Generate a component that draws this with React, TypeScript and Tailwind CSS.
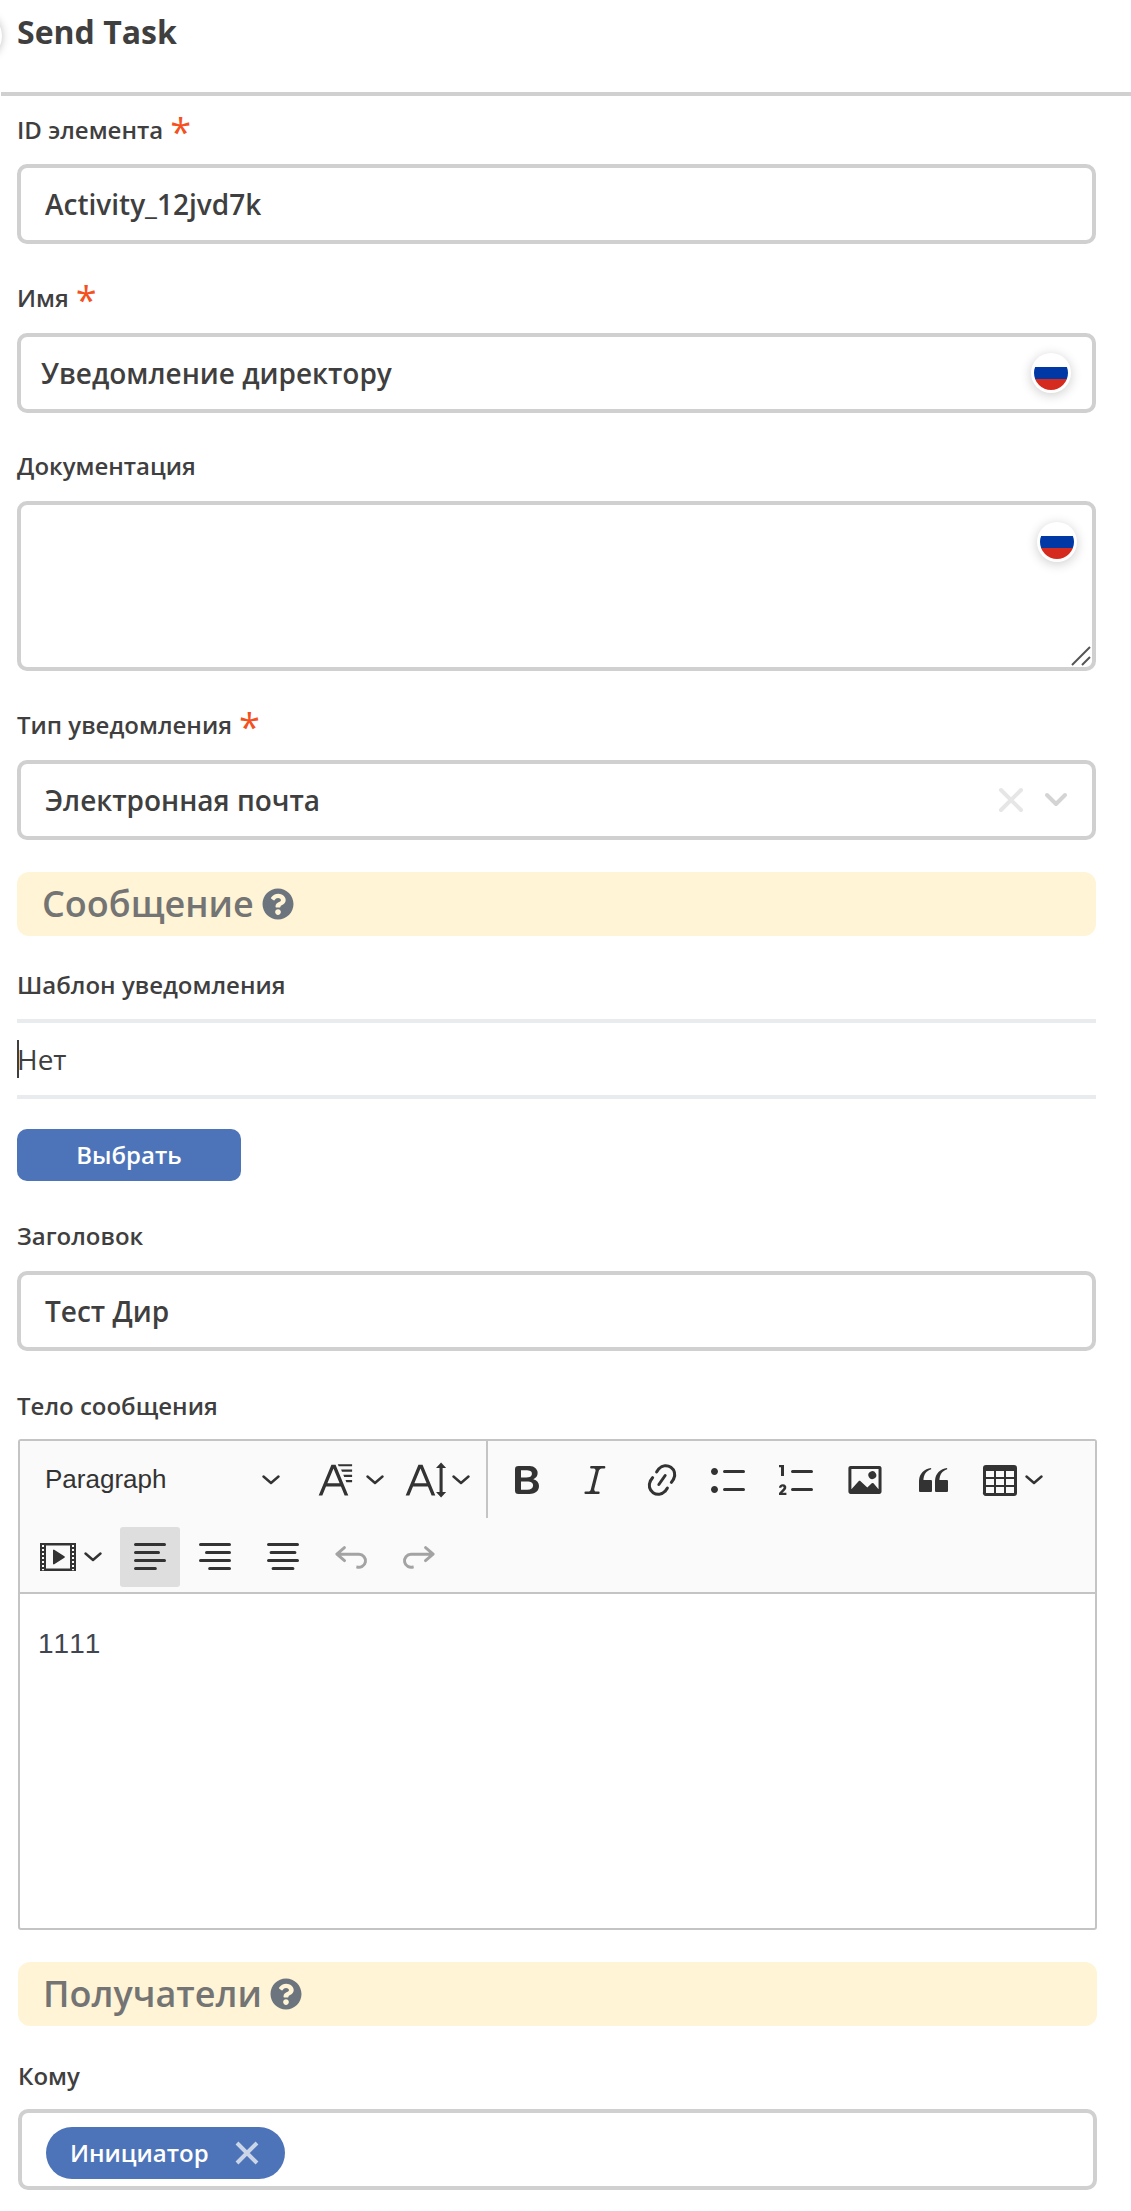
import React from "react";

const F = "[font-family:'Open_Sans','Noto_Sans',sans-serif]";

function Label({ children, req, className = "" }: { children: React.ReactNode; req?: boolean; className?: string }) {
  return (
    <div className={`flex items-start h-[28px] text-[24px] leading-[28px] font-semibold text-[#3f3f3f] ${className}`}>
      <span>{children}</span>
      {req && <span className="ml-[7px] text-[38px] leading-[30px] text-[#f4511e] font-normal">*</span>}
    </div>
  );
}

function Flag({ className = "" }: { className?: string }) {
  return (
    <span className={`absolute w-[40px] h-[40px] rounded-full bg-white shadow-[0_2px_12px_rgba(0,0,0,0.2)] p-[3px] ${className}`}>
      <span className="flex flex-col w-full h-full rounded-full overflow-hidden">
        <span className="h-[11px] bg-white" />
        <span className="h-[12px] bg-[#0039a6]" />
        <span className="flex-1 bg-[#d52b1e]" />
      </span>
    </span>
  );
}

function Help() {
  return (
    <svg width="32" height="32" viewBox="0 0 512 512" className="ml-[8px]">
      <path fill="#6c757d" d="M504 256c0 136.997-111.043 248-248 248S8 392.997 8 256C8 119.083 119.043 8 256 8s248 111.083 248 248zM262.655 90c-54.497 0-89.255 22.957-116.549 63.758-3.536 5.286-2.353 12.415 2.715 16.258l34.699 26.31c5.205 3.947 12.621 3.008 16.665-2.122 17.864-22.658 30.113-35.797 57.303-35.797 20.429 0 45.698 13.148 45.698 32.958 0 14.976-12.363 22.667-32.534 33.976C247.128 238.528 216 254.941 216 296v4c0 6.627 5.373 12 12 12h56c6.627 0 12-5.373 12-12v-1.333c0-28.462 83.186-29.647 83.186-106.667 0-58.002-60.165-102-116.531-102zM256 338c-25.365 0-46 20.635-46 46 0 25.364 20.635 46 46 46s46-20.636 46-46c0-25.365-20.635-46-46-46z" />
    </svg>
  );
}

function Section({ children }: { children: React.ReactNode }) {
  return (
    <div className="flex items-center h-[64px] rounded-[12px] bg-[#fff4d6] pl-[25px] text-[36px] font-semibold text-[#747474]">
      {children}
      <Help />
    </div>
  );
}

const boxCls = "relative rounded-[10px] border-[4px] border-[#d0d0d0] bg-white text-[#3f3f3f]";

function Ic({ d, size = 40, color = "#333", rule, className = "" }: { d: string; size?: number; color?: string; rule?: "evenodd"; className?: string }) {
  return (
    <svg width={size} height={size} viewBox="0 0 20 20" className={`shrink-0 ${className}`}>
      <path d={d} fill={color} fillRule={rule} />
    </svg>
  );
}

function Chev() {
  return (
    <svg width="18" height="10" viewBox="0 0 18 10" className="shrink-0">
      <path d="M1.5 1.5 9 8l7.5-6.5" fill="none" stroke="#333" strokeWidth="2.4" strokeLinecap="round" strokeLinejoin="round" />
    </svg>
  );
}

const P = {
  bold: "M10.187 17H5.773c-.637 0-1.092-.138-1.364-.415-.273-.277-.409-.718-.409-1.323V4.738c0-.617.14-1.062.419-1.332.279-.27.73-.406 1.354-.406h4.68c.69 0 1.288.041 1.793.124.506.083.96.242 1.36.478.341.197.644.447.906.75a3.262 3.262 0 0 1 .808 2.162c0 1.401-.722 2.426-2.167 3.075C15.05 10.175 16 11.315 16 13.01a3.756 3.756 0 0 1-2.296 3.504 6.1 6.1 0 0 1-1.517.377c-.571.073-1.238.11-2 .11zm-.217-6.217H7v4.087h3.069c1.977 0 2.965-.69 2.965-2.072 0-.707-.256-1.22-.768-1.537-.512-.319-1.277-.478-2.296-.478zM7 5.13v3.619h2.606c.729 0 1.292-.067 1.69-.2a1.6 1.6 0 0 0 .91-.765c.165-.267.247-.566.247-.897 0-.707-.26-1.176-.778-1.409-.519-.232-1.31-.348-2.375-.348H7z",
  italic: "m9.586 14.633.021.004c-.036.335.095.655.393.962.082.083.173.15.274.201h1.474a.6.6 0 1 1 0 1.2H5.304a.6.6 0 0 1 0-1.2h1.15c.474-.07.809-.182 1.005-.334.157-.122.291-.32.404-.597l2.416-9.55a1.053 1.053 0 0 0-.281-.823 1.12 1.12 0 0 0-.442-.296H8.15a.6.6 0 0 1 0-1.2h6.443a.6.6 0 1 1 0 1.2h-1.195c-.376.056-.65.155-.823.296-.215.175-.423.439-.623.79l-2.366 9.347z",
  link: "m11.077 15 .991-1.416a.75.75 0 1 1 1.229.86l-1.148 1.64a.748.748 0 0 1-.217.206 5.251 5.251 0 0 1-8.503-5.955.741.741 0 0 1 .12-.274l1.147-1.639a.75.75 0 1 1 1.228.86L4.933 10.7l.006.003a3.75 3.75 0 0 0 6.132 4.294l.006.004zm5.494-5.335a.748.748 0 0 1-.12.274l-1.147 1.639a.75.75 0 1 1-1.228-.86l.86-1.23a3.75 3.75 0 0 0-6.144-4.301l-.86 1.229a.75.75 0 0 1-1.229-.86l1.148-1.64a.748.748 0 0 1 .217-.206 5.251 5.251 0 0 1 8.503 5.955zm-4.563-2.532a.75.75 0 0 1 .184 1.045l-3.155 4.505a.75.75 0 1 1-1.229-.86l3.155-4.506a.75.75 0 0 1 1.045-.184z",
  bullet: "M7 5.75c0 .414.336.75.75.75h9.5a.75.75 0 1 0 0-1.5h-9.5a.75.75 0 0 0-.75.75zm-6 0C1 4.784 1.777 4 2.75 4c.966 0 1.75.777 1.75 1.75 0 .966-.777 1.75-1.75 1.75C1.784 7.5 1 6.723 1 5.75zm6 9c0 .414.336.75.75.75h9.5a.75.75 0 1 0 0-1.5h-9.5a.75.75 0 0 0-.75.75zm-6 0c0-.966.777-1.75 1.75-1.75.966 0 1.75.777 1.75 1.75 0 .966-.777 1.75-1.75 1.75-.966 0-1.75-.777-1.75-1.75z",
  number: "M7 5.75c0 .414.336.75.75.75h9.5a.75.75 0 1 0 0-1.5h-9.5a.75.75 0 0 0-.75.75zM7 14.75c0 .414.336.75.75.75h9.5a.75.75 0 1 0 0-1.5h-9.5a.75.75 0 0 0-.75.75zM3.5 2.5V8H2V3.6H1v-1.1zM1 17.5v-1l2-2.1c.5-.5.4-1.2-.2-1.2-.4 0-.6.3-.6.7H1c0-1.2.8-1.8 1.9-1.8 1.3 0 2 .9 1.7 2-.1.5-.5 1-1.9 2.3h2v1.1z",
  image: "M6.91 10.54c.26-.23.64-.21.88.03l3.36 3.14 2.23-2.06a.64.64 0 0 1 .87 0l2.52 2.97V4.5H3.2v10.12l3.71-4.08zm10.27-7.51c.6 0 1.09.47 1.09 1.05v11.84c0 .59-.49 1.06-1.09 1.06H2.79c-.6 0-1.09-.47-1.09-1.06V4.08c0-.58.49-1.05 1.1-1.05h14.38zm-5.22 5.56a1.96 1.96 0 1 1 3.4-1.96 1.96 1.96 0 0 1-3.4 1.96z",
  quote: "M3 10.423a6.5 6.5 0 0 1 6.056-6.408l.038.67C6.448 5.423 5.354 7.663 5.22 10H9c.552 0 .5.432.5.986v4.511c0 .554-.448.503-1 .503h-5c-.552 0-.5-.449-.5-1.003v-4.574zm8 0a6.5 6.5 0 0 1 6.056-6.408l.038.67c-2.646.739-3.74 2.979-3.873 5.315H17c.552 0 .5.432.5.986v4.511c0 .554-.448.503-1 .503h-5c-.552 0-.5-.449-.5-1.003v-4.574z",
  table: "M3 5.5v3h4v-3H3zm0 4v3h4v-3H3zm0 4v3h4v-3H3zm5 3h4v-3H8v3zm5 0h4v-3h-4v3zm4-4v-3h-4v3h4zm0-4v-3h-4v3h4zm1.5 8a1.5 1.5 0 0 1-1.5 1.5H3A1.5 1.5 0 0 1 1.5 16V4A1.5 1.5 0 0 1 3 2.5h14A1.5 1.5 0 0 1 18.5 4v12zM8 9.5v3h4v-3H8zm0-4v3h4v-3H8z",
  media: "M1 3h18v14H1zM2 4v1h1V4zm0 2v1h1V6zm0 2v1h1V8zm0 2v1h1v-1zm0 2v1h1v-1zm0 2v1h1v-1zm0 2v.6h1V16zM17 4v1h1V4zm0 2v1h1V6zm0 2v1h1V8zm0 2v1h1v-1zm0 2v1h1v-1zm0 2v1h1v-1zm0 2v.6h1V16zM4 4.2v11.6h12V4.2zM7.5 6.7a.4.4 0 0 1 .6-.35l5.1 3.3a.4.4 0 0 1 0 .7l-5.1 3.3a.4.4 0 0 1-.6-.35z",
  alignLeft: "M2 3.75c0 .414.336.75.75.75h14.5a.75.75 0 1 0 0-1.5H2.75a.75.75 0 0 0-.75.75zm0 8c0 .414.336.75.75.75h14.5a.75.75 0 1 0 0-1.5H2.75a.75.75 0 0 0-.75.75zm0 4c0 .414.336.75.75.75h9.929a.75.75 0 1 0 0-1.5H2.75a.75.75 0 0 0-.75.75zm0-8c0 .414.336.75.75.75h11.5a.75.75 0 1 0 0-1.5H2.75a.75.75 0 0 0-.75.75z",
  alignRight: "M18 3.75a.75.75 0 0 1-.75.75H2.75a.75.75 0 1 1 0-1.5h14.5a.75.75 0 0 1 .75.75zm0 8a.75.75 0 0 1-.75.75H2.75a.75.75 0 1 1 0-1.5h14.5a.75.75 0 0 1 .75.75zm0 4a.75.75 0 0 1-.75.75H7.321a.75.75 0 1 1 0-1.5h9.929a.75.75 0 0 1 .75.75zm0-8a.75.75 0 0 1-.75.75H5.75a.75.75 0 1 1 0-1.5h11.5a.75.75 0 0 1 .75.75z",
  alignCenter: "M2 3.75c0 .414.336.75.75.75h14.5a.75.75 0 1 0 0-1.5H2.75a.75.75 0 0 0-.75.75zm0 8c0 .414.336.75.75.75h14.5a.75.75 0 1 0 0-1.5H2.75a.75.75 0 0 0-.75.75zm2.286 4c0 .414.336.75.75.75h9.928a.75.75 0 1 0 0-1.5H5.036a.75.75 0 0 0-.75.75zm-1-8c0 .414.336.75.75.75h11.928a.75.75 0 1 0 0-1.5H4.036a.75.75 0 0 0-.75.75z",
  undo: "m5.042 9.367 2.189 1.837a.75.75 0 0 1-.965 1.149l-3.788-3.18a.747.747 0 0 1-.21-.284.75.75 0 0 1 .17-.945L6.23 4.762a.75.75 0 1 1 .964 1.15L4.863 7.866h8.917A.75.75 0 0 1 14 7.9a4 4 0 1 1-1.477 7.718l.344-1.489a2.5 2.5 0 1 0 1.094-4.73l.008-.032H5.042z",
  redo: "m14.958 9.367-2.189 1.837a.75.75 0 0 0 .965 1.149l3.788-3.18a.747.747 0 0 0 .21-.284.75.75 0 0 0-.17-.945L13.77 4.762a.75.75 0 1 0-.964 1.15l2.331 1.955H6.22A.75.75 0 0 0 6 7.9a4 4 0 1 0 1.477 7.718l-.344-1.489A2.5 2.5 0 1 1 6.039 9.4l-.008-.032h8.927z",
  fontSize: "M9.816 11.5 7.038 4.785 4.261 11.5h5.555Zm.62 1.5H3.641l-1.666 4.028H.312l5.789-14h1.875l5.789 14h-1.663L10.436 13ZM9 2.8h6.5v1H9.4zM10.5 5.2h5v1H10.9zM11.5 7.6h4v1H11.9zM12.5 10h3v1H12.9z",
  lineHeight: "M9.816 11.5 7.038 4.785 4.261 11.5h5.555Zm.62 1.5H3.641l-1.666 4.028H.312l5.789-14h1.875l5.789 14h-1.663L10.436 13ZM16.4 2l2.3 2.6h-1.6v10.8h1.6L16.4 18l-2.3-2.6h1.6V4.6h-1.6z",
};

export default function App() {
  return (
    <div className={`relative w-[1131px] h-[2211px] bg-white overflow-hidden ${F}`}>
      <div className="absolute left-[-46px] top-[12px] w-[48px] h-[48px] rounded-full bg-white shadow-[0_0_8px_rgba(0,0,0,0.25)]" />
      <div className="pl-[17px] h-[92px] pt-[10px] text-[32px] leading-[44px] font-bold text-[#3f3f3f]">Send Task</div>
      <div className="relative ml-[1px] h-[4px] bg-[#d0d0d0]" />
      <div className="relative pl-[17px] pr-[35px]">
        <Label req className="mt-[20px]">ID элемента</Label>
        <div className={`${boxCls} mt-[20px] h-[80px] flex items-center pl-[24px] text-[28px] font-semibold`}>Activity_12jvd7k</div>

        <Label req className="mt-[40px]">Имя</Label>
        <div className={`${boxCls} mt-[21px] h-[80px] flex items-center pl-[20px] text-[28px] font-semibold`}>
          Уведомление директору
          <Flag className="right-[21px] top-[16px]" />
        </div>

        <Label className="mt-[39px]">Документация</Label>
        <div className={`${boxCls} mt-[21px] h-[170px]`}>
          <Flag className="right-[15px] top-[17px]" />
          <svg width="20" height="20" viewBox="0 0 20 20" className="absolute right-[1px] bottom-[1px]">
            <path d="M1 19 19 1M11 19l8-8" stroke="#555" strokeWidth="2" />
          </svg>
        </div>

        <Label req className="mt-[40px]">Тип уведомления</Label>
        <div className={`${boxCls} mt-[21px] h-[80px] flex items-center pl-[24px] pr-[24px] text-[28px] font-semibold`}>
          <span className="flex-1">Электронная почта</span>
          <svg width="26" height="26" viewBox="0 0 26 26" className="mr-[20px]">
            <path d="M3 3l20 20M23 3 3 23" stroke="#e6e6e6" strokeWidth="4" strokeLinecap="round" />
          </svg>
          <svg width="24" height="16" viewBox="0 0 24 16">
            <path d="M3 3l9 9 9-9" fill="none" stroke="#d4d4d4" strokeWidth="4" strokeLinecap="round" strokeLinejoin="round" />
          </svg>
        </div>

        <div className="mt-[32px]"><Section>Сообщение</Section></div>

        <Label className="mt-[35px]">Шаблон уведомления</Label>
        <div className="mt-[20px] h-[4px] bg-[#e9ecef]" />
        <div className="h-[72px] flex items-center text-[28px] leading-[36px] text-[#3f3f3f]">
          <span className="w-[2px] h-[38px] bg-[#3f3f3f] -mr-[2px]" />
          Нет
        </div>
        <div className="h-[4px] bg-[#e9ecef]" />
        <div className="mt-[30px] w-[224px] h-[52px] rounded-[10px] bg-[#4d74b8] flex items-center justify-center text-[24px] font-semibold text-white">Выбрать</div>

        <Label className="mt-[41px]">Заголовок</Label>
        <div className={`${boxCls} mt-[21px] h-[80px] flex items-center pl-[24px] text-[28px] font-semibold`}>Тест Дир</div>

        <Label className="mt-[41px]">Тело сообщения</Label>

        <div className="mt-[19px] ml-[1px] mr-[-1px] rounded-[3px] border-[2px] border-[#c4c4c4]">
          <div className="relative h-[153px] bg-[#fafafa] border-b-[2px] border-[#c4c4c4]">
            <div className="flex items-center h-[77px] pl-[25px]">
              <span className="w-[217px] text-[26px] text-[#333] [font-family:'Liberation_Sans',sans-serif]">Paragraph</span>
              <Chev />
              <Ic d={P.fontSize} size={44} className="ml-[38px]" />
              <span className="ml-[4px]"><Chev /></span>
              <Ic d={P.lineHeight} size={44} className="ml-[21px]" />
              <span className="ml-[3px]"><Chev /></span>
              <span className="ml-[16px] w-[2px] h-[77px] bg-[#c4c4c4] self-start" />
              <Ic d={P.bold} size={40} className="ml-[19px]" />
              <Ic d={P.italic} size={40} className="ml-[28px]" />
              <Ic d={P.link} size={40} className="ml-[27px]" />
              <Ic d={P.bullet} size={40} className="ml-[27px]" />
              <Ic d={P.number} size={40} className="ml-[28px]" />
              <Ic d={P.image} size={40} className="ml-[28px]" />
              <Ic d={P.quote} size={40} className="ml-[28px]" />
              <Ic d={P.table} size={40} className="ml-[27px]" />
              <span className="ml-[5px]"><Chev /></span>
            </div>
            <div className="flex items-center h-[71px] mt-[3px] pl-[18px]">
              <Ic d={P.media} size={40} />
              <span className="ml-[6px]"><Chev /></span>
              <span className="ml-[18px] w-[60px] h-[60px] rounded-[3px] bg-[#dedede] flex items-center justify-center"><Ic d={P.alignLeft} size={40} /></span>
              <Ic d={P.alignRight} size={40} className="ml-[15px]" />
              <Ic d={P.alignCenter} size={40} className="ml-[28px]" />
              <Ic d={P.undo} size={40} color="#a3a3a3" className="ml-[28px]" />
              <Ic d={P.redo} size={40} color="#a3a3a3" className="ml-[28px]" />
            </div>
          </div>
          <div className="h-[334px] pl-[18px] pt-[32px] text-[28px] leading-[36px] [font-kerning:none] text-[#404550] [font-family:'Liberation_Sans',sans-serif]">1111</div>
        </div>

        <div className="mt-[32px] ml-[1px] mr-[-1px]"><Section>Получатели</Section></div>

        <Label className="mt-[36px] ml-[1px]">Кому</Label>
        <div className={`${boxCls} mt-[19px] ml-[1px] mr-[-1px] h-[81px] flex items-start pl-[24px]`}>
          <div className="flex items-center mt-[14px] h-[52px] w-[239px] rounded-full bg-[#4d74b8] pl-[24px] text-[24px] font-semibold text-white">
            Инициатор
            <svg width="26" height="26" viewBox="0 0 26 26" className="ml-[25px]">
              <path d="M3 3l20 20M23 3 3 23" stroke="#cbd5e8" strokeWidth="4" />
            </svg>
          </div>
        </div>
      </div>
    </div>
  );
}
